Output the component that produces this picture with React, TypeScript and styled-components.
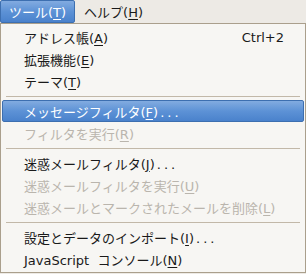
import React from "react";
import styled, { createGlobalStyle, css } from "styled-components";

const Global = createGlobalStyle`
  html, body { margin: 0; padding: 0; background: #edeae5; }
  body {
    font-family: "DejaVu Sans", "Noto Sans CJK JP", sans-serif;
    font-size: 13px;
    color: #1a1a1a;
  }
`;

const Page = styled.div`
  width: 306px;
  height: 274px;
  display: flex;
  flex-direction: column;
  background: #edeae5;
`;

const MenuBar = styled.div`
  display: flex;
  height: 23px;
  background: #edeae5;
`;

const highlight = css`
  background: linear-gradient(to bottom, #82abe0 0%, #5d92d6 50%, #4a82cc 100%);
  border: 1px solid #3d6fb0;
  border-radius: 2px;
  color: #ffffff;
`;

const MenuBarItem = styled.div<{ $active?: boolean }>`
  box-sizing: border-box;
  height: 23px;
  padding: 0 8px;
  display: flex;
  align-items: center;
  white-space: nowrap;
  border: 1px solid transparent;
  ${(p) => p.$active && highlight}
`;

const Menu = styled.div`
  box-sizing: border-box;
  width: 306px;
  height: 250px;
  border: 1px solid #aa9f8c;
  background: #f7f6f3;
  padding: 2px 1px;
  display: flex;
  flex-direction: column;
`;

const Item = styled.div<{ $active?: boolean; $disabled?: boolean }>`
  box-sizing: border-box;
  height: 22px;
  flex: none;
  display: flex;
  align-items: center;
  justify-content: space-between;
  padding: 0 19px 0 21px;
  white-space: nowrap;
  border: 1px solid transparent;
  color: ${(p) => (p.$disabled ? "#bab5ad" : "#1a1a1a")};
  ${(p) => p.$active && highlight}
`;

const Label = styled.span`
  white-space: pre;
`;

const Accel = styled.span`
  margin-left: 16px;
`;

const Separator = styled.div`
  height: 8px;
  flex: none;
  display: flex;
  align-items: center;
  padding: 0 4px;
  &::after {
    content: "";
    flex: 1;
    height: 1px;
    background: #c2b8a8;
  }
`;

const Key = styled.span`
  text-decoration: underline;
  text-underline-offset: 2px;
`;

const Dots = styled.span`
  letter-spacing: 3px;
  margin-left: 2px;
`;

type Entry =
  | { sep: true }
  | {
      sep?: false;
      pre: string;
      key: string;
      dots?: boolean;
      accel?: string;
      active?: boolean;
      disabled?: boolean;
    };

const entries: Entry[] = [
  { pre: "アドレス帳", key: "A", accel: "Ctrl+2" },
  { pre: "拡張機能", key: "E" },
  { pre: "テーマ", key: "T" },
  { sep: true },
  { pre: "メッセージフィルタ", key: "F", dots: true, active: true },
  { pre: "フィルタを実行", key: "R", disabled: true },
  { sep: true },
  { pre: "迷惑メールフィルタ", key: "J", dots: true },
  { pre: "迷惑メールフィルタを実行", key: "U", disabled: true },
  { pre: "迷惑メールとマークされたメールを削除", key: "L", disabled: true },
  { sep: true },
  { pre: "設定とデータのインポート", key: "I", dots: true },
  { pre: "JavaScript  コンソール", key: "N" },
];

export default function App() {
  return (
    <>
      <Global />
      <Page>
        <MenuBar>
          <MenuBarItem $active>
            <Label>
              ツール(<Key>T</Key>)
            </Label>
          </MenuBarItem>
          <MenuBarItem>
            <Label>
              ヘルプ(<Key>H</Key>)
            </Label>
          </MenuBarItem>
        </MenuBar>
        <Menu>
          {entries.map((e, i) =>
            e.sep ? (
              <Separator key={i} />
            ) : (
              <Item key={i} $active={e.active} $disabled={e.disabled}>
                <Label>
                  {e.pre}(<Key>{e.key}</Key>)
                  {e.dots && <Dots>...</Dots>}
                </Label>
                {e.accel && <Accel>{e.accel}</Accel>}
              </Item>
            )
          )}
        </Menu>
      </Page>
    </>
  );
}
